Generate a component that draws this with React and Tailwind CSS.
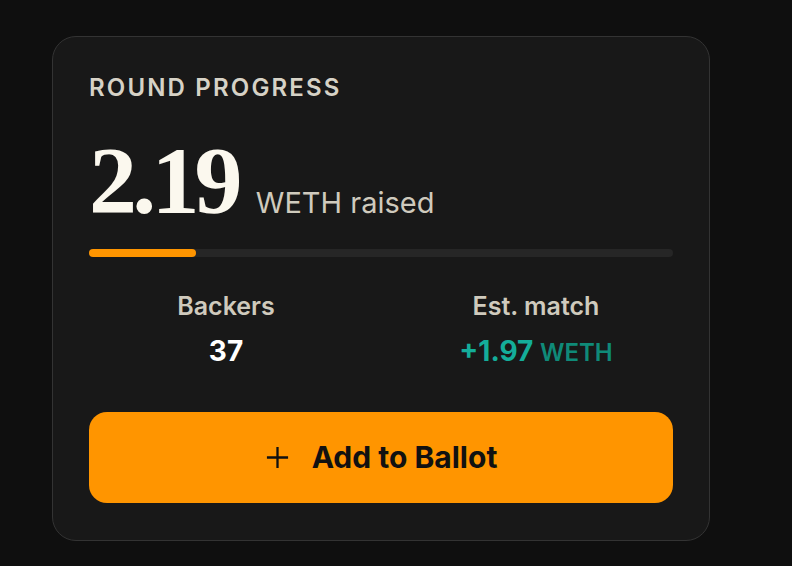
export default function App() {
  return (
    <div className="min-h-screen w-full bg-[#0f0f0f] pl-[52px] pt-[36px] font-['Inter',sans-serif]">
      <div className="w-[658px] rounded-[24px] border border-[#333333] bg-[#181818] px-9 pt-9 pb-[37px]">
        {/* Title */}
        <h2 className="text-[24px] leading-[30px] font-semibold tracking-[0.09em] text-[#d6d2c6]">
          ROUND PROGRESS
        </h2>

        {/* Amount */}
        <div className="mt-[30px] flex items-baseline gap-[18px]">
          <span className="font-['Liberation_Serif',serif] text-[96px] leading-[96px] font-bold tracking-[-0.05em] text-[#fbf8ee]">
            2.19
          </span>
          <span className="text-[29px] text-[#cfcabd]">WETH raised</span>
        </div>

        {/* Progress */}
        <div className="mt-[20px] h-2 w-full rounded-full bg-[#262626]">
          <div className="h-2 w-[18.3%] rounded-full bg-[#ff9500]" />
        </div>

        {/* Stats */}
        <div className="mt-[34px] grid grid-cols-2 gap-9 text-center">
          <div className="flex flex-col items-center gap-[14px]">
            <span className="text-[25px] leading-[30px] font-semibold text-[#cfcabd]">Backers</span>
            <span className="text-[28px] leading-[32px] font-bold text-white">37</span>
          </div>
          <div className="flex flex-col items-center gap-[14px]">
            <span className="text-[25px] leading-[30px] font-semibold text-[#cfcabd]">Est. match</span>
            <span className="text-[28px] leading-[32px] font-bold text-[#14ad9a]">
              +1.97 <span className="text-[24px] font-semibold text-[#0f8a78]">WETH</span>
            </span>
          </div>
        </div>

        {/* Button */}
        <button className="mt-[43px] flex h-[91px] w-full items-center justify-center gap-[22px] rounded-[18px] bg-[#ff9500] text-[30px] font-bold text-[#111111]">
          <svg width="25" height="25" viewBox="0 0 26 26" fill="none" stroke="#111" strokeWidth="2.4">
            <path d="M13 2v22M2 13h22" />
          </svg>
          Add to Ballot
        </button>
      </div>
    </div>
  );
}
